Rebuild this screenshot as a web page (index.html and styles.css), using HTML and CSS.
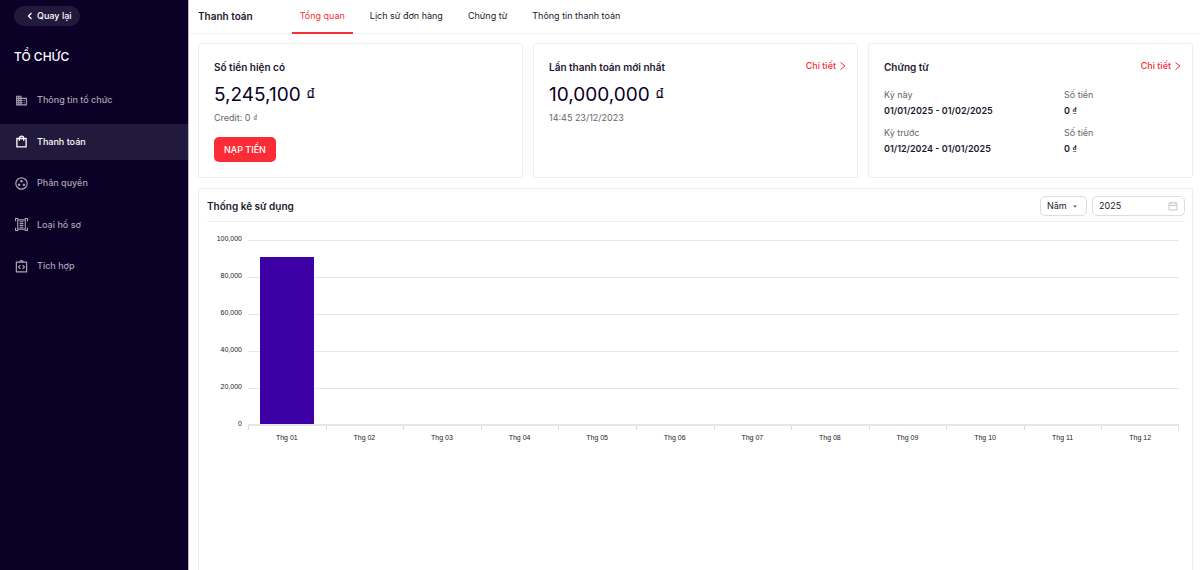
FILE: index.html
```html
<!DOCTYPE html>
<html lang="vi">
<head>
<meta charset="utf-8">
<meta name="viewport" content="width=device-width, initial-scale=1">
<title>Thanh toán</title>
<link rel="stylesheet" href="styles.css">
</head>
<body>
<div class="app">
  <aside class="sidebar">
    <button class="back" type="button">
      <svg class="back-icon" viewBox="0 0 6 8" aria-hidden="true"><path d="M4.5 1 1.5 4l3 3" fill="none" stroke="currentColor" stroke-width="1.3"/></svg>
      Quay lại
    </button>
    <h2 class="org-title">TỔ CHỨC</h2>
    <nav class="menu">
      <a class="menu-item" href="#">
        <svg class="menu-icon" viewBox="0 0 24 24" aria-hidden="true"><path fill="currentColor" d="M12 7V3H2v18h20V7H12zM6 19H4v-2h2v2zm0-4H4v-2h2v2zm0-4H4V9h2v2zm0-4H4V5h2v2zm4 12H8v-2h2v2zm0-4H8v-2h2v2zm0-4H8V9h2v2zm0-4H8V5h2v2zm10 12h-8v-2h2v-2h-2v-2h2v-2h-2V9h8v10zm-2-8h-2v2h2v-2zm0 4h-2v2h2v-2z"/></svg>
        Thông tin tổ chức
      </a>
      <a class="menu-item active" href="#" aria-current="page">
        <svg class="menu-icon" viewBox="0 0 24 24" aria-hidden="true"><path fill="none" stroke="currentColor" stroke-width="2.4" stroke-linejoin="round" d="M3.500 6.500h17v15.500h-17zM8 10.500V6a4 4 0 0 1 8 0v4.500"/></svg>
        Thanh toán
      </a>
      <a class="menu-item" href="#">
        <svg class="menu-icon" viewBox="0 0 24 24" aria-hidden="true"><circle cx="12" cy="12" r="10.500" fill="none" stroke="currentColor" stroke-width="2.2"/><g fill="currentColor"><circle cx="12" cy="8" r="2.300"/><circle cx="7.500" cy="14.500" r="2.300"/><circle cx="16.500" cy="14.500" r="2.300"/></g></svg>
        Phân quyền
      </a>
      <a class="menu-item" href="#">
        <svg class="menu-icon" viewBox="0 0 24 24" aria-hidden="true"><g fill="none" stroke="currentColor" stroke-width="2"><path d="M1 6V1h5M18 1h5v5M23 18v5h-5M6 23H1v-5"/><path d="M5 3.500h14v17H5z"/><path d="M8.500 7h7M8.500 10.300h7M8.500 13.600h7M8.500 17h7"/></g></svg>
        Loại hồ sơ
      </a>
      <a class="menu-item" href="#">
        <svg class="menu-icon" viewBox="0 0 24 24" aria-hidden="true"><g fill="none" stroke="currentColor" stroke-width="2.2"><path d="M2.500 4h19v18h-19z" stroke-linejoin="round"/><path d="m10 9.500-3.500 3.500 3.500 3.500M14 9.500l3.500 3.500-3.500 3.500"/><path d="M9 4a3 3 0 0 1 6 0"/></g></svg>
        Tích hợp
      </a>
    </nav>
  </aside>

  <div class="page">
    <header class="topbar">
      <h1 class="page-title">Thanh toán</h1>
      <nav class="tabs">
        <a class="tab active" href="#" aria-current="page">Tổng quan</a>
        <a class="tab" href="#">Lịch sử đơn hàng</a>
        <a class="tab" href="#">Chứng từ</a>
        <a class="tab" href="#">Thông tin thanh toán</a>
      </nav>
    </header>

    <main class="content">
      <div class="cards">
        <section class="card">
          <div class="card-head"><h3 class="card-title">Số tiền hiện có</h3></div>
          <p class="amount">5,245,100 <span class="dong">₫</span></p>
          <p class="note">Credit: 0 <span class="dong">₫</span></p>
          <button class="topup" type="button">NẠP TIỀN</button>
        </section>
        <section class="card">
          <div class="card-head">
            <h3 class="card-title">Lần thanh toán mới nhất</h3>
            <a class="more" href="#">Chi tiết <svg class="more-icon" viewBox="0 0 6 8" aria-hidden="true"><path d="m.5.5 4.500 3.500-4.500 3.500" fill="none" stroke="currentColor"/></svg></a>
          </div>
          <p class="amount">10,000,000 <span class="dong">₫</span></p>
          <p class="note">14:45 23/12/2023</p>
        </section>
        <section class="card">
          <div class="card-head">
            <h3 class="card-title">Chứng từ</h3>
            <a class="more" href="#">Chi tiết <svg class="more-icon" viewBox="0 0 6 8" aria-hidden="true"><path d="m.5.5 4.500 3.500-4.500 3.500" fill="none" stroke="currentColor"/></svg></a>
          </div>
          <dl class="periods">
            <div><dt>Kỳ này</dt><dd>01/01/2025 - 01/02/2025</dd></div>
            <div><dt>Số tiền</dt><dd>0 <span class="dong">₫</span></dd></div>
            <div><dt>Kỳ trước</dt><dd>01/12/2024 - 01/01/2025</dd></div>
            <div><dt>Số tiền</dt><dd>0 <span class="dong">₫</span></dd></div>
          </dl>
        </section>
      </div>

      <section class="usage">
        <div class="usage-head">
          <h3 class="card-title">Thống kê sử dụng</h3>
          <div class="filters">
            <span class="field unit">
              <select class="unit-select" aria-label="Đơn vị thời gian"><option>Năm</option></select>
              <svg class="caret" viewBox="0 0 4 3" aria-hidden="true"><path d="M0 .5h4l-2 2z" fill="currentColor"/></svg>
            </span>
            <span class="field year">
              <input class="year-input" type="text" value="2025" aria-label="Năm">
              <svg class="calendar" viewBox="0 0 10 10" aria-hidden="true"><path d="M1 2h8v7H1zM1 4.500h8M3 .5v2.500M7 .5v2.500" fill="none" stroke="currentColor" stroke-width=".8"/></svg>
            </span>
          </div>
        </div>
        <div class="chart">
          <div class="y-axis"><span>100,000</span><span>80,000</span><span>60,000</span><span>40,000</span><span>20,000</span><span>0</span></div>
          <div class="plot">
            <div class="slot"><div class="bar" style="height: 91%"></div></div>
            <div class="slot"></div><div class="slot"></div><div class="slot"></div>
            <div class="slot"></div><div class="slot"></div><div class="slot"></div>
            <div class="slot"></div><div class="slot"></div><div class="slot"></div>
            <div class="slot"></div><div class="slot"></div>
          </div>
          <div class="x-axis">
            <span>Thg 01</span><span>Thg 02</span><span>Thg 03</span><span>Thg 04</span><span>Thg 05</span><span>Thg 06</span><span>Thg 07</span><span>Thg 08</span><span>Thg 09</span><span>Thg 10</span><span>Thg 11</span><span>Thg 12</span>
          </div>
        </div>
      </section>
    </main>
  </div>
</div>
</body>
</html>
```
FILE: styles.css
```css
* { box-sizing: border-box; margin: 0; padding: 0; }

body {
  font-family: Inter, "Noto Sans", sans-serif;
  font-size: 9px;
  line-height: 14px;
  color: #1c1830;
  background: #fff;
}

a { color: inherit; text-decoration: none; }
button, input, select { font: inherit; color: inherit; border: 0; background: none; }

.app { display: flex; min-height: 100vh; }

/* Sidebar */
.sidebar {
  flex: none;
  width: 189px;
  padding-top: 6px;
  color: #fff;
  background: #0b0026;
  border-right: 1px solid #bbb8c4;
}
.back {
  display: flex;
  align-items: center;
  gap: 4px;
  height: 20px;
  margin-left: 14px;
  padding: 0 8px 0 13px;
  font-weight: 500;
  background: #221a3c;
  border-radius: 10px;
}
.back-icon { width: 6px; height: 8px; }
.org-title {
  margin: 21px 0 0 14px;
  font-size: 12px;
  line-height: 20px;
  font-weight: 500;
}
.menu {
  display: flex;
  flex-direction: column;
  justify-content: space-between;
  min-height: 202px;
  margin-top: 15px;
}
.menu-item {
  display: flex;
  align-items: center;
  gap: 9px;
  height: 36px;
  padding-left: 15px;
  font-weight: 500;
  color: #aaa6b2;
}
.menu-item.active { color: #fff; background: #221a3c; }
.menu-icon { width: 13px; height: 13px; }

/* Header */
.page { flex: 1; min-width: 0; display: flex; flex-direction: column; }
.topbar {
  display: flex;
  gap: 39px;
  height: 34px;
  padding-left: 9px;
  border-bottom: 1px solid #f2f2f2;
}
.page-title { font-size: 10px; line-height: 32px; font-weight: 600; }
.tabs { display: flex; gap: 9px; }
.tab { height: 34px; padding: 0 8px; line-height: 32px; }
.tab.active { color: #fb2c36; border-bottom: 2px solid #fb2c36; }

/* Summary cards */
.content {
  flex: 1;
  display: flex;
  flex-direction: column;
  gap: 10px;
  padding: 9px 7px 0 9px;
}
.cards { display: grid; grid-template-columns: repeat(3, 1fr); gap: 10px; }
.card {
  min-height: 135px;
  padding: 14px 11px 13px 15px;
  border: 1px solid #eee;
  border-radius: 3px;
}
.card-head { display: flex; justify-content: space-between; }
.card-title { font-size: 10px; line-height: 18px; font-weight: 600; }
.more { display: flex; align-items: center; gap: 4px; height: 16px; font-weight: 500; color: #fb2c36; }
.more-icon { width: 6px; height: 8px; }
.amount { margin-top: 7px; font-size: 19px; line-height: 24px; color: #0b0026; }
.dong { font-family: "Liberation Sans", Arial, sans-serif; }
.note { margin-top: 4px; color: #666; }
.topup {
  height: 25px;
  margin-top: 12px;
  padding: 0 10px;
  font-weight: 500;
  color: #fff;
  background: #fb2c36;
  border-radius: 5px;
}
.periods {
  display: grid;
  grid-template-columns: 20fr 13fr;
  row-gap: 6px;
  margin-top: 11px;
  line-height: 16px;
}
.periods dt { color: #666; }
.periods dd { font-weight: 600; }

/* Usage chart */
.usage {
  flex: 1;
  padding: 7px 7px 0 8px;
  border: 1px solid #eee;
  border-bottom: 0;
  border-radius: 3px 3px 0 0;
}
.usage-head {
  display: flex;
  justify-content: space-between;
  align-items: flex-start;
  height: 26px;
  border-bottom: 1px solid #eee;
}
.usage-head .card-title { line-height: 20px; }
.filters { display: flex; gap: 5px; }
.field {
  display: flex;
  align-items: center;
  height: 20px;
  padding: 0 6px;
  border: 1px solid #ddd;
  border-radius: 5px;
}
.unit { width: 47px; }
.year { width: 93px; }
.unit-select { flex: 1; min-width: 0; appearance: none; }
.year-input { flex: 1; min-width: 0; }
.caret { width: 4px; height: 3px; margin-right: 3px; color: #555; }
.calendar { width: 10px; height: 10px; color: #bbb; }

.chart {
  display: grid;
  grid-template-columns: 41px 1fr;
  padding: 18px 6px 0 0;
  font-family: "Liberation Sans", Arial, sans-serif;
  font-size: 7px;
  line-height: 10px;
  color: #222;
}
.y-axis {
  display: flex;
  flex-direction: column;
  justify-content: space-between;
  margin: -6px 0 -3px;
  padding-right: 6px;
  text-align: right;
}
.plot {
  display: grid;
  grid-template-columns: repeat(12, 1fr);
  height: 186px;
  border-bottom: 2px solid #e6e6e6;
  background: repeating-linear-gradient(#e6e6e6 0 1px, transparent 1px 37px);
}
.slot { display: flex; justify-content: center; align-items: flex-end; }
.bar { width: 70%; background: #3d00a5; }
.x-axis { grid-column: 2; display: grid; grid-template-columns: repeat(12, 1fr); text-align: center; }
.x-axis span { padding-top: 7px; background: linear-gradient(#ddd, #ddd) left top / 1px 4px no-repeat; }
.x-axis span:last-child {
  background:
    linear-gradient(#ddd, #ddd) left top / 1px 4px no-repeat,
    linear-gradient(#ddd, #ddd) right top / 1px 4px no-repeat;
}
```
